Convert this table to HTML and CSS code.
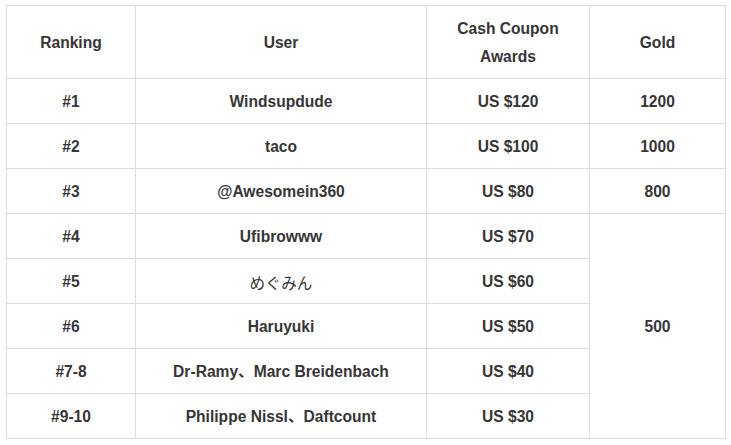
FILE: index.html
```html
<!DOCTYPE html>
<html>
<head>
<meta charset="utf-8">
<link rel="stylesheet" href="styles.css">
</head>
<body>
<table class="rank">
  <colgroup>
    <col class="c1"><col class="c2"><col class="c3"><col class="c4">
  </colgroup>
  <thead>
    <tr class="head"><th>Ranking</th><th>User</th><th>Cash Coupon<br>Awards</th><th>Gold</th></tr>
  </thead>
  <tbody>
    <tr><td>#1</td><td>Windsupdude</td><td>US $120</td><td>1200</td></tr>
    <tr><td>#2</td><td>taco</td><td>US $100</td><td>1000</td></tr>
    <tr><td>#3</td><td>@Awesomein360</td><td>US $80</td><td>800</td></tr>
    <tr><td>#4</td><td>Ufibrowww</td><td>US $70</td><td rowspan="5">500</td></tr>
    <tr><td>#5</td><td class="jp">めぐみん</td><td>US $60</td></tr>
    <tr><td>#6</td><td>Haruyuki</td><td>US $50</td></tr>
    <tr><td>#7-8</td><td>Dr-Ramy、Marc Breidenbach</td><td>US $40</td></tr>
    <tr><td>#9-10</td><td>Philippe Nissl、Daftcount</td><td>US $30</td></tr>
  </tbody>
</table>
</body>
</html>
```
FILE: styles.css
```css
html, body {
  margin: 0;
  background: #fff;
}
body {
  padding: 5px 6px;
  font-family: "Liberation Sans", Arial, "Noto Sans CJK JP", sans-serif;
  color: #363636;
}
.rank {
  border-collapse: collapse;
  table-layout: fixed;
  width: 719px;
}
.c1 { width: 129px; }
.c2 { width: 291px; }
.c3 { width: 163px; }
.c4 { width: 136px; }
.rank th, .rank td {
  border: 1px solid #dcdcdc;
  text-align: center;
  vertical-align: middle;
  font-size: 15.6px;
  font-weight: bold;
  padding: 1px 0 0;
  height: 43px;
  line-height: 28px;
}
.rank .head th {
  height: 71px;
}
.rank td.jp {
  font-weight: normal;
  font-family: "Noto Sans CJK JP", sans-serif;
}
```
